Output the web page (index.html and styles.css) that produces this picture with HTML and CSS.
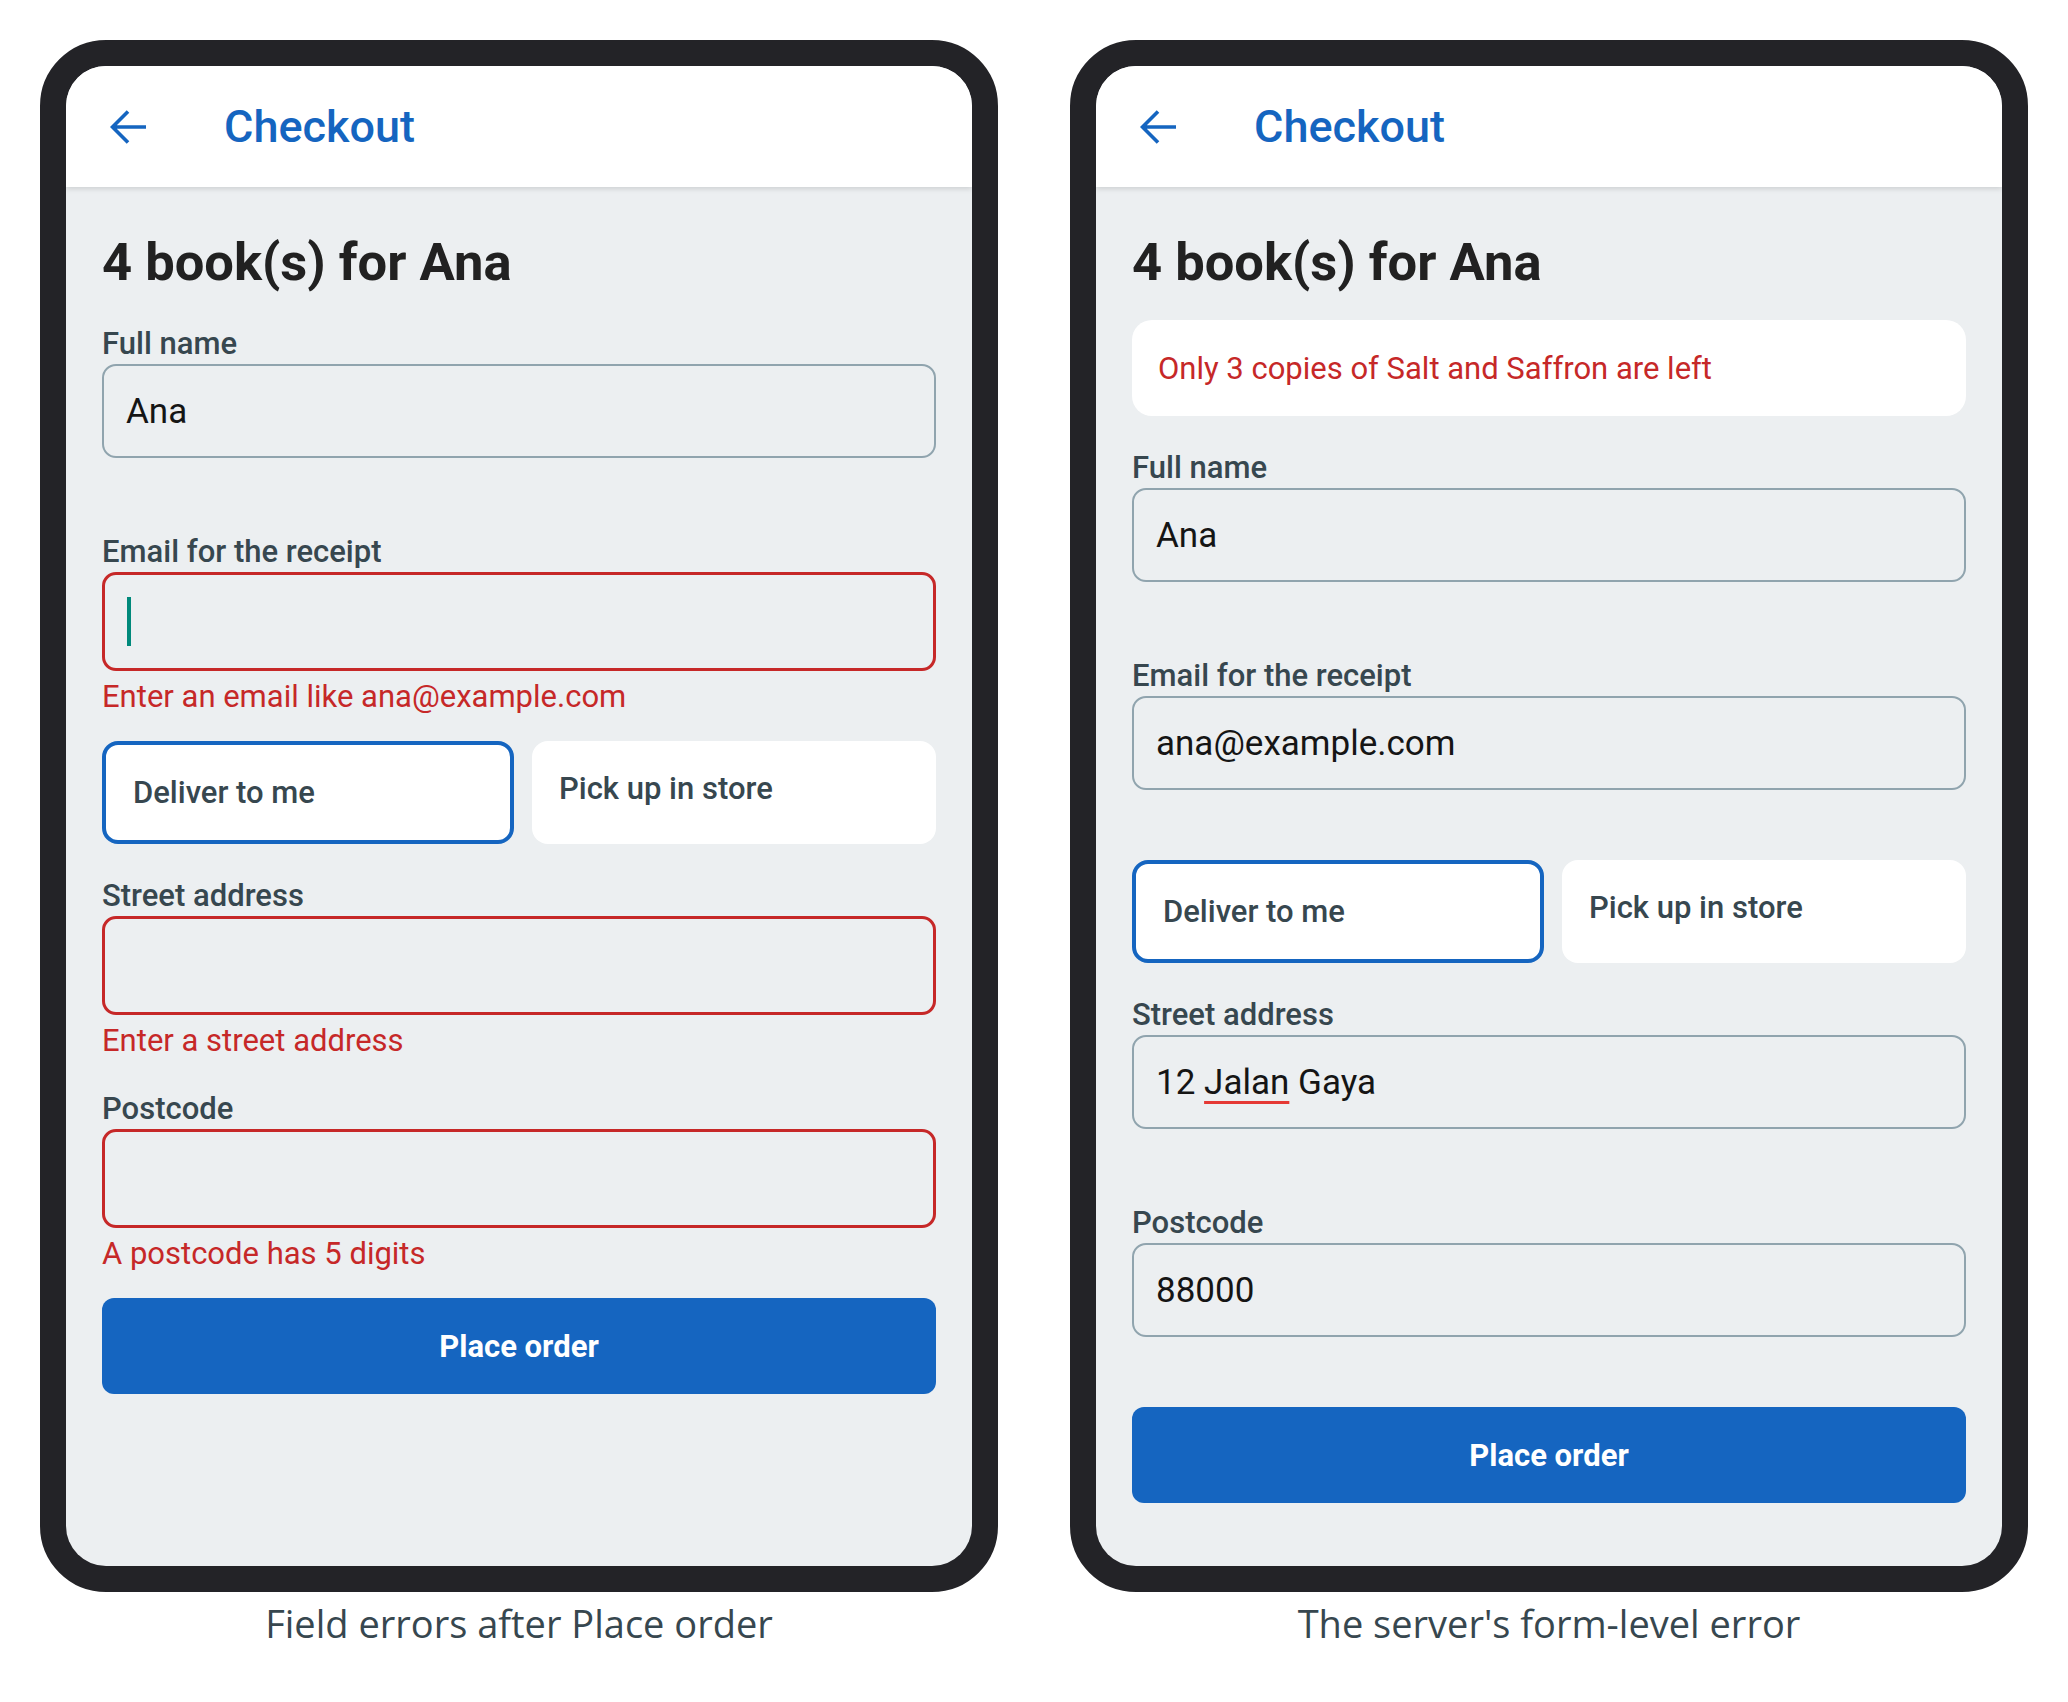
FILE: index.html
```html
<!DOCTYPE html>
<html lang="en">
<head>
<meta charset="utf-8">
<title>Checkout form states</title>
<link rel="stylesheet" href="styles.css">
</head>
<body>
<main class="board">

  <figure class="shot">
    <div class="phone">
      <div class="screen">
        <header class="appbar">
          <svg class="back" width="36" height="34" viewBox="0 0 36 34" aria-hidden="true">
            <path d="M36 17H3M18 1.5L2.5 17L18 32.5" fill="none" stroke="#1565C0" stroke-width="3.6"/>
          </svg>
          <h1 class="appbar-title">Checkout</h1>
        </header>
        <section class="content">
          <h2 class="heading">4 book(s) for Ana</h2>

          <div class="field">
            <label class="label">Full name</label>
            <div class="input">Ana</div>
            <div class="hint"></div>
          </div>

          <div class="field">
            <label class="label">Email for the receipt</label>
            <div class="input input-error"><span class="caret"></span></div>
            <div class="hint"><p class="error">Enter an email like ana@example.com</p></div>
          </div>

          <div class="toggle">
            <div class="choice choice-on">Deliver to me</div>
            <div class="choice">Pick up in store</div>
          </div>

          <div class="field">
            <label class="label">Street address</label>
            <div class="input input-error"></div>
            <div class="hint"><p class="error">Enter a street address</p></div>
          </div>

          <div class="field">
            <label class="label">Postcode</label>
            <div class="input input-error"></div>
            <div class="hint"><p class="error">A postcode has 5 digits</p></div>
          </div>

          <button class="primary" type="button">Place order</button>
        </section>
      </div>
    </div>
    <figcaption class="caption">Field errors after Place order</figcaption>
  </figure>

  <figure class="shot">
    <div class="phone">
      <div class="screen">
        <header class="appbar">
          <svg class="back" width="36" height="34" viewBox="0 0 36 34" aria-hidden="true">
            <path d="M36 17H3M18 1.5L2.5 17L18 32.5" fill="none" stroke="#1565C0" stroke-width="3.6"/>
          </svg>
          <h1 class="appbar-title">Checkout</h1>
        </header>
        <section class="content">
          <h2 class="heading">4 book(s) for Ana</h2>

          <div class="alert">Only 3 copies of Salt and Saffron are left</div>

          <div class="field">
            <label class="label">Full name</label>
            <div class="input">Ana</div>
            <div class="hint"></div>
          </div>

          <div class="field">
            <label class="label">Email for the receipt</label>
            <div class="input">ana@example.com</div>
            <div class="hint"></div>
          </div>

          <div class="toggle">
            <div class="choice choice-on">Deliver to me</div>
            <div class="choice">Pick up in store</div>
          </div>

          <div class="field">
            <label class="label">Street address</label>
            <div class="input">12 <span class="misspelt">Jalan</span> Gaya</div>
            <div class="hint"></div>
          </div>

          <div class="field">
            <label class="label">Postcode</label>
            <div class="input">88000</div>
            <div class="hint"></div>
          </div>

          <button class="primary" type="button">Place order</button>
        </section>
      </div>
    </div>
    <figcaption class="caption">The server's form-level error</figcaption>
  </figure>

</main>
</body>
</html>
```

FILE: styles.css
```css
html, body {
  margin: 0;
  background: #ffffff;
}

body {
  font-family: Roboto, "Noto Sans", "Liberation Sans", sans-serif;
  color: #212121;
}

.board {
  display: flex;
  gap: 72px;
  padding: 40px;
}

.shot {
  margin: 0;
  width: 958px;
}

/* device frame */
.phone {
  box-sizing: border-box;
  width: 958px;
  height: 1552px;
  border: 26px solid #232327;
  border-radius: 66px;
  background: #232327;
}

.screen {
  height: 100%;
  border-radius: 40px;
  overflow: hidden;
  background: #eceff1;
  display: flex;
  flex-direction: column;
}

/* top app bar */
.appbar {
  position: relative;
  z-index: 1;
  flex: none;
  height: 121px;
  background: #ffffff;
  display: flex;
  align-items: center;
  padding-left: 44px;
  gap: 78px;
  box-shadow: 0 2px 5px rgba(0, 0, 0, 0.13);
}

.back {
  display: block;
  flex: none;
}

.appbar-title {
  margin: 0;
  font-size: 45px;
  font-weight: 500;
  color: #1565c0;
  line-height: 53px;
}

/* form body */
.content {
  display: flex;
  flex-direction: column;
  gap: 28px;
  padding: 45px 36px 0;
}

.heading {
  margin: 0;
  font-size: 52.5px;
  font-weight: 700;
  line-height: 60px;
  color: #212121;
}

.alert {
  box-sizing: border-box;
  height: 96px;
  display: flex;
  align-items: center;
  padding: 0 26px;
  background: #ffffff;
  border-radius: 20px;
  color: #c62828;
  font-size: 31px;
}

.field {
  display: flex;
  flex-direction: column;
}

.label {
  display: block;
  height: 44px;
  font-size: 31px;
  font-weight: 500;
  line-height: 47px;
  color: #37474f;
}

.input {
  box-sizing: border-box;
  height: 94px;
  display: flex;
  align-items: center;
  padding: 0 22px;
  border: 2px solid #90a4ae;
  border-radius: 14px;
  font-size: 35px;
  color: #151515;
}

.input-error {
  height: 99px;
  border: 3px solid #c62828;
  padding: 0 21px;
}

.caret {
  display: block;
  width: 4px;
  height: 49px;
  margin-left: 1px;
  background: #00897b;
}

.misspelt {
  text-decoration: underline;
  text-decoration-color: #e53935;
  text-decoration-thickness: 3px;
  text-underline-offset: 7px;
  margin: 0 0.25em;
}

.hint {
  height: 42px;
}

.error {
  margin: 10px 0 0;
  font-size: 31px;
  line-height: 31px;
  color: #c62828;
}

/* delivery method toggle */
.toggle {
  display: flex;
  gap: 18px;
  align-items: stretch;
}

.choice {
  flex: 1;
  padding: 30px 27px;
  background: #ffffff;
  border-radius: 16px;
  font-size: 31px;
  font-weight: 500;
  line-height: 35px;
  color: #37474f;
}

.choice-on {
  border: 4px solid #1565c0;
}

.primary {
  height: 96px;
  border: 0;
  border-radius: 12px;
  background: #1565c0;
  color: #ffffff;
  font-family: Roboto, "Noto Sans", sans-serif;
  font-size: 31px;
  font-weight: 700;
}

.caption {
  margin-top: 5px;
  text-align: center;
  font-family: "Open Sans", "Noto Sans", sans-serif;
  font-size: 38px;
  color: #37474f;
}
```
